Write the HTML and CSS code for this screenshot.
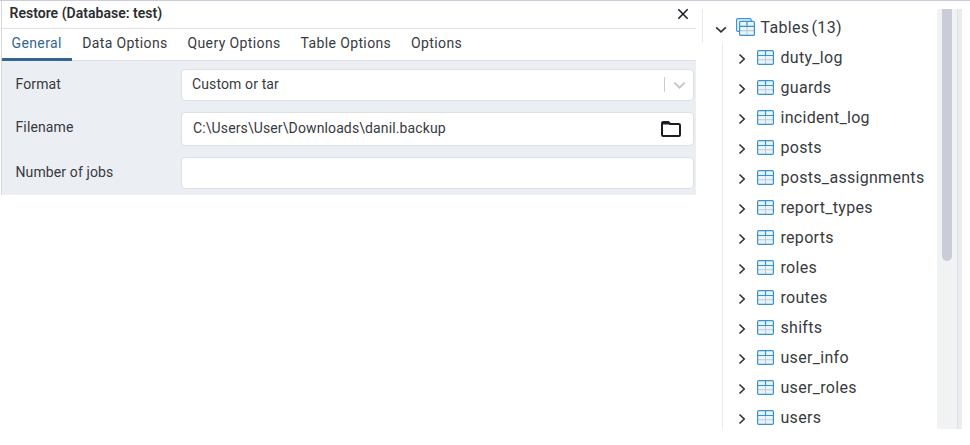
FILE: index.html
```html
<!DOCTYPE html>
<html lang="en">
<head>
<meta charset="utf-8">
<title>Restore (Database: test)</title>
<link rel="stylesheet" href="styles.css">
</head>
<body>
<svg class="defs" width="0" height="0" aria-hidden="true">
  <symbol id="table" viewBox="0 0 17 15">
    <rect x=".6" y=".6" width="15.8" height="13.8" rx="1.2" fill="#e9f5fc"/>
    <path d="M1 9.8H16M8.5 6V14" stroke="#c3c9ce" stroke-width="1.1"/>
    <rect x=".6" y=".6" width="15.8" height="13.8" rx="1.2" fill="none" stroke="#3c91cf" stroke-width="1.2"/>
    <path d="M1 5.5H16M8.5 1V5.5" stroke="#3c91cf" stroke-width="1.2"/>
  </symbol>
  <symbol id="chevron" viewBox="0 0 8 12"><path d="M1.5 1.5 6.2 6 1.5 10.5" fill="none" stroke="#303236" stroke-width="1.6"/></symbol>
</svg>
<div class="app">
  <section class="dialog">
    <header class="title"><span>Restore (Database: test)</span>
      <svg width="12" height="12" viewBox="0 0 12 12"><path d="M1.3 1.3 10.7 10.7M10.7 1.3 1.3 10.7" stroke="#17191e" stroke-width="1.5"/></svg>
    </header>
    <nav class="tabs">
      <span class="tab active">General</span><span class="tab">Data Options</span><span class="tab">Query Options</span><span class="tab">Table Options</span><span class="tab">Options</span>
    </nav>
    <div class="form">
      <label>Format</label>
      <div class="field select"><span>Custom or tar</span><i class="divider"></i>
        <svg width="13" height="9" viewBox="0 0 13 9"><path d="M1.3 1.6 6.5 6.6 11.7 1.6" fill="none" stroke="#c6c6c8" stroke-width="2"/></svg>
      </div>
      <label>Filename</label>
      <div class="field file"><span>C:\Users\User\Downloads\danil.backup</span>
        <svg width="20" height="16" viewBox="0 0 20 16"><path d="M1 2.2Q1 1 2.2 1H7.3L9.2 3H17.8Q19 3 19 4.2V13.8Q19 15 17.8 15H2.2Q1 15 1 13.8Z" fill="none" stroke="#1b1d21" stroke-width="2"/><path d="M1.5 1H7.3L9.3 3.5H1.5Z" fill="#1b1d21"/></svg>
      </div>
      <label>Number of jobs</label>
      <div class="field"></div>
    </div>
  </section>
  <section class="tree">
    <div class="root">
      <svg class="down" width="12" height="8" viewBox="0 0 12 8"><path d="M1.2 1.3 6 5.9 10.8 1.3" fill="none" stroke="#303236" stroke-width="1.6"/></svg>
      <svg class="stack" width="19" height="18" viewBox="0 0 19 18">
        <path d="M3 13.4H1.8Q.6 13.4.6 12.2V1.8Q.6.6 1.8.6H14Q15.2.6 15.2 1.8V3" fill="#e9f5fc" stroke="#3c9bd6" stroke-width="1.2"/>
        <rect x="3.6" y="3.4" width="14.8" height="14" rx="1" fill="#e9f5fc"/>
        <path d="M4 12.6H18M11 8.5V17" stroke="#c3c9ce" stroke-width="1.1"/>
        <rect x="3.6" y="3.4" width="14.8" height="14" rx="1" fill="none" stroke="#3c91cf" stroke-width="1.2"/>
        <path d="M4 8.3H18M11 4V8.3" stroke="#3c91cf" stroke-width="1.2"/>
      </svg>
      <span>Tables <b>(13)</b></span>
    </div>
    <ul>
      <li><svg class="chev"><use href="#chevron"/></svg><svg class="icon"><use href="#table"/></svg><span>duty_log</span></li>
      <li><svg class="chev"><use href="#chevron"/></svg><svg class="icon"><use href="#table"/></svg><span>guards</span></li>
      <li><svg class="chev"><use href="#chevron"/></svg><svg class="icon"><use href="#table"/></svg><span>incident_log</span></li>
      <li><svg class="chev"><use href="#chevron"/></svg><svg class="icon"><use href="#table"/></svg><span>posts</span></li>
      <li><svg class="chev"><use href="#chevron"/></svg><svg class="icon"><use href="#table"/></svg><span>posts_assignments</span></li>
      <li><svg class="chev"><use href="#chevron"/></svg><svg class="icon"><use href="#table"/></svg><span>report_types</span></li>
      <li><svg class="chev"><use href="#chevron"/></svg><svg class="icon"><use href="#table"/></svg><span>reports</span></li>
      <li><svg class="chev"><use href="#chevron"/></svg><svg class="icon"><use href="#table"/></svg><span>roles</span></li>
      <li><svg class="chev"><use href="#chevron"/></svg><svg class="icon"><use href="#table"/></svg><span>routes</span></li>
      <li><svg class="chev"><use href="#chevron"/></svg><svg class="icon"><use href="#table"/></svg><span>shifts</span></li>
      <li><svg class="chev"><use href="#chevron"/></svg><svg class="icon"><use href="#table"/></svg><span>user_info</span></li>
      <li><svg class="chev"><use href="#chevron"/></svg><svg class="icon"><use href="#table"/></svg><span>user_roles</span></li>
      <li><svg class="chev"><use href="#chevron"/></svg><svg class="icon"><use href="#table"/></svg><span>users</span></li>
    </ul>
  </section>
  <div class="scroll"><div class="thumb"></div></div>
</div>
</body>
</html>
```

FILE: styles.css
```css
* { box-sizing: border-box; }
body { margin: 0; background: #fff; color: #383a3e; font-family: Roboto, "Liberation Sans", sans-serif; }
svg { display: block; flex: none; }
.defs { position: absolute; }
.app { display: flex; align-items: flex-start; width: 970px; height: 445px; border-top: 1px solid #c9ccd8; overflow: hidden; }
.dialog { width: 695px; height: 194px; margin-left: 1px; border-left: 1px solid #d6d8de; }
.title { display: flex; align-items: center; justify-content: space-between; height: 28px; padding: 0 7px 4px 7.5px; border-bottom: 1px solid #dfe1e7; font-size: 14px; font-weight: 600; letter-spacing: .02px; color: #2b2d31; }
.title svg { margin-top: 3px; }
.tabs { display: flex; height: 32px; border-bottom: 1px solid #dde0e6; font-size: 14px; letter-spacing: .38px; }
.tab { height: 32px; padding: 0 10px 0 9.9px; line-height: 28px; white-space: nowrap; }
.tab.active { padding-left: 9.5px; padding-right: 10.5px; color: #326690; border-bottom: 3px solid #326690; }
.form { display: grid; grid-template-columns: 165.5px 513px; grid-template-rows: 32px 34px 32px; row-gap: 11px; height: 134px; padding: 8px 0 0 13.5px; background: #ebeef3; font-size: 14px; letter-spacing: .12px; }
.form label { line-height: 31px; }
.field { display: flex; align-items: center; padding: 0 10px 2px; background: #fff; border: 1px solid #dde0e6; border-radius: 4px; }
.field span { flex: 1; }
.divider { width: 1px; height: 15px; margin-right: 8px; background: #ccc; }
.select { padding-right: 7px; }
.select svg { margin-top: 3px; }
.file { padding: 0 12px 0 11px; }
.file span { margin-top: -2px; }
.tree { width: 235px; height: 420px; margin: 8px 0 0 6px; font-size: 16px; letter-spacing: .3px; }
.root { display: flex; align-items: center; height: 34px; padding: 3px 0 0 12px; border-left: 1px solid #e8eaee; }
.down { margin: 5px 9px 0 0; }
.stack { margin: -1px 5.5px 0 0; }
.root b { margin-left: -2px; font-weight: 400; }
ul { height: 386px; margin: 0 0 0 20px; padding: 0; list-style: none; border-left: 1px solid #e8eaee; }
li { display: flex; align-items: center; height: 30px; padding: 0 0 2px 14.5px; }
.chev { width: 8px; height: 12px; margin: 4px 11.5px 0 0; }
.icon { width: 17px; height: 15px; margin-right: 6.5px; }
.scroll { width: 25px; height: 420px; margin-top: 8px; padding-left: 5px; background: linear-gradient(90deg, #f1f2f4 20px, #dfe1e8 20px 21px, #eaecf2 21px); }
.thumb { width: 10px; height: 252px; background: #cacdd8; border-radius: 0 0 5px 5px; }
```
